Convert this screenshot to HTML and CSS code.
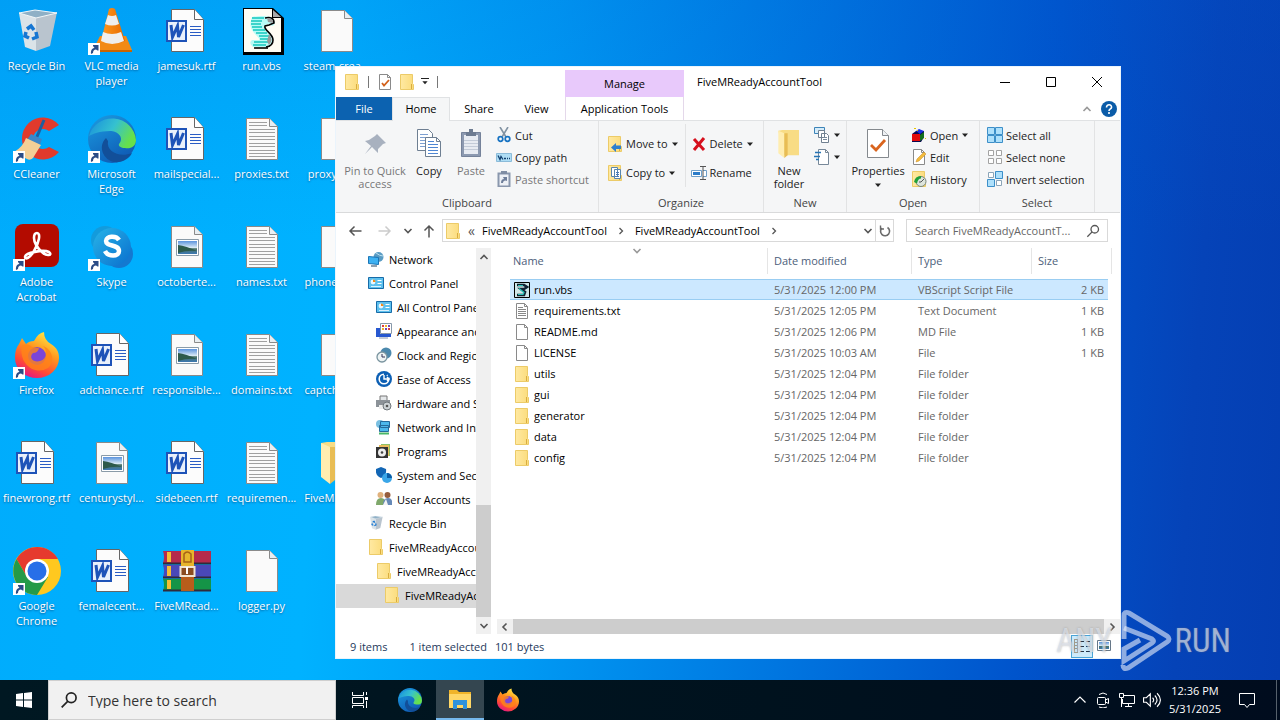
FILE: index.html
```
<!DOCTYPE html>
<html lang="en">
<head>
<meta charset="utf-8">
<title>Desktop</title>
<link rel="stylesheet" href="styles.css">
</head>
<body>
<svg class="defs" aria-hidden="true">
  <defs>
    <linearGradient id="g-cone" x1="0" x2="1"><stop offset="0" stop-color="#ff9a1f"/><stop offset="1" stop-color="#e66a00"/></linearGradient>
    <linearGradient id="g-edge-top" x1="0" y1="0" x2="1" y2="0.4"><stop offset="0" stop-color="#168ddd"/><stop offset=".55" stop-color="#35c1d0"/><stop offset="1" stop-color="#66e04c"/></linearGradient>
    <linearGradient id="g-edge-left" x1="0" y1="0" x2="0.6" y2="1"><stop offset="0" stop-color="#1b9de2"/><stop offset="1" stop-color="#0f5cb5"/></linearGradient>
    <linearGradient id="g-fox" x1="0.8" y1="0" x2="0.3" y2="1"><stop offset="0" stop-color="#fff04a"/><stop offset=".4" stop-color="#ff9a1f"/><stop offset=".75" stop-color="#ff4a35"/><stop offset="1" stop-color="#e31587"/></linearGradient>
    <linearGradient id="g-skype" x1="0" y1="0" x2="1" y2="1"><stop offset="0" stop-color="#27b4e8"/><stop offset="1" stop-color="#0a6fce"/></linearGradient>
    <linearGradient id="g-folder" x1="0" x2="1"><stop offset="0" stop-color="#ffe9a2"/><stop offset="1" stop-color="#fbdc7c"/></linearGradient>
    <linearGradient id="g-sky" x1="0" y1="0" x2="0" y2="1"><stop offset="0" stop-color="#5b93dd"/><stop offset=".5" stop-color="#d7e8f5"/><stop offset=".6" stop-color="#4d7465"/><stop offset="1" stop-color="#3b78b5"/></linearGradient>
    <linearGradient id="g-bin" x1="0" x2="1"><stop offset="0" stop-color="#e8eef2"/><stop offset="1" stop-color="#b3c0ca"/></linearGradient>
  </defs>
  <symbol id="i-short" viewBox="0 0 12 12"><path d="M0 0h12v12H0z" fill="#fff"/><path d="M3 11C2.500 7 4.500 5 6.500 5L5 3V2h5.500v5.500h-1L8 6.500C6 6.500 5 8 5 10z" fill="#2b4c86"/></symbol>
  <symbol id="i-bin" viewBox="0 0 48 48"><path d="M6 6l17 4v34l-11-4z" fill="#dbe3e8"/><path d="M23 10l21-5-7 34-14 5z" fill="#b9c4ce"/><path d="M6 6l16-3 22 3-21 5z" fill="#8fb0c6" stroke="#f2f6f8"/><path d="M14 22l4-3 3 4M23 25l1 5-5 2M16 31l-4-2 1-4" fill="none" stroke="#1676d2" stroke-width="3.500"/></symbol>
  <symbol id="i-vlc" viewBox="0 0 48 48"><path d="M12 29h26l6 14H5z" fill="#f28a16"/><path d="M5 43h39v2H5z" fill="#c96400"/><path d="M21 2q3-2 6 0l10 32q-12 6-24 0z" fill="url(#g-cone)"/><path d="M20 8q4 2 8 0l3 9q-7 3-14 0zM15 25q9 4 18 0l3 9q-12 6-23 0z" fill="#eee"/></symbol>
  <symbol id="i-page" viewBox="0 0 48 48"><path d="M8.500 3.500h23l8 8v33h-31z" fill="#fafafa" stroke="#8a8a8a"/><path d="M31.500 3.500v8h8" fill="#e8eef2" stroke="#8a8a8a"/></symbol>
  <symbol id="i-text" viewBox="0 0 48 48"><use href="#i-page"/><path d="M11 7.500h18M11 10.500h18M11 14.500h26M11 17.500h26M11 21.500h26M11 24.500h26M11 28.500h26M11 31.500h26M11 35.500h26M11 38.500h26M11 41.500h26" stroke="#a0a0a0"/></symbol>
  <symbol id="i-word" viewBox="0 0 48 48"><path d="M8.500 2.500h23l9 10v32h-32z" fill="#fcfcfc" stroke="#666"/><path d="M31.500 2.500v10h9" fill="#fff" stroke="#666"/><path d="M27 19.500h11M27 22.500h11M27 25.500h11M27 28.500h11" stroke="#2a5cc4"/><path d="M3 13h21v22H3z" fill="#1e53b8"/><path d="M5 15h17v18H5z" fill="#e9f0fb"/><path d="M8 18l1.500 12 5-11 1 11 5-12" fill="none" stroke="#1e53b8" stroke-width="3"/></symbol>
  <symbol id="i-image" viewBox="0 0 48 48"><use href="#i-page"/><path d="M13.500 16.500h22v16h-22z" fill="#fff" stroke="#8a9ba8"/><path d="M15 18h19v13H15z" fill="url(#g-sky)"/><path d="M15 22q8 1 19 6-10-1-19 2z" fill="#2d5a4b"/></symbol>
  <symbol id="i-vbs" viewBox="0 0 48 48"><path d="M5 1h30l11 10v37H5z" fill="#000"/><path d="M6 2h28v9h9v34H6z" fill="#fffdf4"/><path d="M35 3l8 7h-8z" fill="#aaa"/><path d="M14 10q10-2 18 0c6 2 6 8 2 9-5-3-10-1-6 3 8 6 9 14 1 18H15q-5-4-1-7h7c2-1-4-5-7-10-3-5-1-9 0-13z" fill="#b8fbf6"/><path d="M14 11h12M13 14h11M13 17h10M14 20h10M15 23h12M18 26h11M21 29h10M22 32h9M16 35h14M15 38h13" stroke="#14c8bd" stroke-width="1.500"/><path d="M27 11q9-2 9 5l-5 2-4 1c-2 4 8 7 8 14q0 6-7 7" fill="none" stroke="#000" stroke-width="1.600"/><path d="M29 11q7 0 6 5l-5-1zM31 27q5 6 0 11l-2-4z" fill="#999"/><path d="M16 41h14" stroke="#000" stroke-width="1.600"/></symbol>
  <symbol id="i-vbs16" viewBox="0 0 16 16"><path d="M.500.500h15v15H.500z" fill="#cfe6e8" stroke="#000"/><path d="M3 3h7l3 2-3 2H7l4 3-1 3H3" fill="none" stroke="#123" stroke-width="2.600"/><path d="M4 3.500h5M5 6.500l5 4-1 2H4" fill="none" stroke="#28c7ba" stroke-width="1.200"/></symbol>
  <symbol id="i-cc" viewBox="0 0 48 48"><path d="M46 10A21 21 0 1 0 46 37L36 32A10 10 0 1 1 36 16z" fill="#e13a2c"/><path d="M31 5l-8 19" stroke="#1d5fa0" stroke-width="3"/><path d="M18 19l11 5-2 6-13-5z" fill="#3b86c8"/><path d="M13 23l15 7-8 13q-3 3-6 1l-13-7q9-5 12-14z" fill="#f4cf96"/></symbol>
  <symbol id="i-edge" viewBox="0 0 48 48"><circle cx="24" cy="24" r="24" fill="url(#g-edge-left)"/><path d="M1 21A24 24 0 0 1 48 25c0 7-6 9-11 8-4 0-7-2-6-4 6-7-2-13-9-13C12 16 4 19 1 21z" fill="url(#g-edge-top)"/><path d="M18 23c-9 9-2 22 8 24 8 1 15-3 18-9-12 5-26-1-24-12z" fill="#124f99"/></symbol>
  <symbol id="i-adobe" viewBox="0 0 48 48"><rect x="2" y="1" width="44" height="43" rx="8" fill="#b30b00"/><path d="M24 10c4 0 2 10-3 18-4 7-9 9-9 6 0-4 18-8 24-5 4 3-2 5-7 0-5-4-8-10-8-14 0-3 1-5 3-5z" fill="none" stroke="#fff" stroke-width="2.600"/></symbol>
  <symbol id="i-skype" viewBox="0 0 48 48"><circle cx="17" cy="17" r="14" fill="#139bdc"/><circle cx="31" cy="31" r="14" fill="#1478d0"/><circle cx="24" cy="24" r="19" fill="url(#g-skype)"/><path d="M31 17c-3-5-13-4-13 1 0 6 13 3 13 10 0 6-11 6-14 0" fill="none" stroke="#fff" stroke-width="4.500"/></symbol>
  <symbol id="i-fox" viewBox="0 0 48 48"><path d="M6 13l3-6 4 6q3-3 8-3 4-8 10-9 0 8 7 12c6 4 8 8 8 14a22 20 0 0 1-44 0C2 21 3 17 6 13z" fill="url(#g-fox)"/><circle cx="24" cy="25" r="9" fill="#7b45d8"/><path d="M9 14q7-2 10 2l7 1q-1 5-6 5c-5 5 1 10 7 8 8-2 7-12 3-15 9 3 13 15 5 22-13 8-30-4-26-23z" fill="#ff8418" opacity=".8"/></symbol>
  <symbol id="i-chrome" viewBox="0 0 48 48"><circle cx="24" cy="24" r="24" fill="#ffc81f"/><path d="M3.500 12A24 24 0 0 1 45 12H24L14 30z" fill="#e63a2e"/><path d="M3.500 12A24 24 0 0 0 24 48l11-18-21 0z" fill="#249a48"/><circle cx="24" cy="24" r="12" fill="#fff"/><circle cx="24" cy="24" r="9.500" fill="#276fe8"/></symbol>
  <symbol id="i-rar" viewBox="0 0 48 48"><path d="M0 4h48v12H0q2-6 0-12z" fill="#b52a4c"/><path d="M0 18h48v12H0q2-6 0-12z" fill="#4a48b8"/><path d="M0 32h48v12H0q2-6 0-12z" fill="#159447"/><path d="M0 16.500h48M0 30.500h48M0 43.500h48" stroke="#302a3b" stroke-width="2"/><path d="M4 5h4v10H4zM4 19h4v10H4zM4 33h4v9H4z" fill="#f5bd34"/><path d="M18 3h13v17H18z" fill="#e7b52c"/><path d="M18 27h13v17H18z" fill="#b85d1b"/><path d="M21 7q3-4 7 0v8h-7z" fill="none" stroke="#a66217" stroke-width="1.500"/><path d="M17.500 20h14v9h-14z" fill="#8a4c20" stroke="#f1e4d2" stroke-width="2"/><path d="M24 20v7" stroke="#fff" stroke-width="2"/></symbol>
  <symbol id="i-bigfolder" viewBox="0 0 48 48"><path d="M8 4l6-1h25v38H16z" fill="#f8dc85"/><path d="M8 4l9 4v37l-9-7z" fill="#ffedb0"/><path d="M17 8h5v33l-5 4z" fill="#e8bd55"/></symbol>
  <symbol id="i-folder" viewBox="0 0 16 16"><path d="M1.500.500h12v9l1 1v5h-13z" fill="url(#g-folder)" stroke="#eccb68"/><path d="M12.500 10v5" stroke="#d9ad3f" fill="none"/></symbol>
  <symbol id="i-file" viewBox="0 0 16 16"><path d="M2.500.500h8l3 3v12h-11z" fill="#fff" stroke="#8a8a8a"/><path d="M10.500.500v3h3" fill="none" stroke="#8a8a8a"/></symbol>
  <symbol id="i-txt" viewBox="0 0 16 16"><use href="#i-file"/><path d="M4 4.500h5M4 6.500h8M4 8.500h8M4 10.500h8M4 12.500h8" stroke="#888"/></symbol>
  <symbol id="i-check" viewBox="0 0 16 16"><use href="#i-file"/><path d="M5 9l2 2.500 5-5.500" fill="none" stroke="#d2601a" stroke-width="1.800"/></symbol>
  <symbol id="i-props" viewBox="0 0 32 32"><path d="M5.500 1.500h15l6 6v22h-21z" fill="#fff" stroke="#84898e"/><path d="M20.500 1.500v6h6" fill="#eef1f4" stroke="#84898e"/><path d="M9 17l5 5 9-10" fill="none" stroke="#d9641e" stroke-width="2.800"/></symbol>
  <symbol id="i-down" viewBox="0 0 8 8"><path d="M1 2.500h6L4 6z" fill="#222"/></symbol>
  <symbol id="i-chev-up" viewBox="0 0 10 10"><path d="M1.500 7L5 3.500 8.500 7" fill="none" stroke="currentColor" stroke-width="1.600"/></symbol>
  <symbol id="i-chev-thin" viewBox="0 0 14 14"><path d="M1.500 9.500L7 4l5.500 5.500" fill="none" stroke="currentColor" stroke-width="1.200"/></symbol>
  <symbol id="i-chev-dn" viewBox="0 0 10 10"><path d="M1.500 3L5 6.500 8.500 3" fill="none" stroke="currentColor" stroke-width="1.600"/></symbol>
  <symbol id="i-chev-l" viewBox="0 0 10 10"><path d="M6.500 1.500L3 5l3.500 3.500" fill="none" stroke="currentColor" stroke-width="1.600"/></symbol>
  <symbol id="i-chev-r" viewBox="0 0 10 10"><path d="M3.500 2L6.500 5l-3 3" fill="none" stroke="currentColor" stroke-width="1.300"/></symbol>
  <symbol id="i-arrow" viewBox="0 0 16 16"><path d="M14.500 8H3M7.500 3.500L3 8l4.500 4.500" fill="none" stroke="currentColor" stroke-width="1.500"/></symbol>
  <symbol id="i-min" viewBox="0 0 12 12"><path d="M1 6.500h10" stroke="#000"/></symbol>
  <symbol id="i-max" viewBox="0 0 12 12"><path d="M1.500 1.500h9v9h-9z" fill="none" stroke="#000"/></symbol>
  <symbol id="i-close" viewBox="0 0 12 12"><path d="M1 1l10 10M11 1L1 11" stroke="#000"/></symbol>
  <symbol id="i-help" viewBox="0 0 16 16"><circle cx="8" cy="8" r="8" fill="#0b5ca8"/><path d="M5.500 6.500c0-4 5.500-3.500 5 0-.300 1.500-2.500 1.500-2.500 3.500M8 11v2" fill="none" stroke="#fff" stroke-width="1.600"/></symbol>
  <symbol id="i-pin" viewBox="0 0 32 32"><path d="M18 6l9 9-3 1-5 5v4l-6-6-7 7 6-8-6-5 4-1 6-4z" fill="#a8b1bf"/></symbol>
  <symbol id="i-copy" viewBox="0 0 32 32"><path d="M4.500 1.500h11l4 4v17h-15z" fill="#fff" stroke="#6e7f92"/><path d="M7 6.500h8M7 9.500h9M7 12.500h9M7 15.500h9M7 18.500h9" stroke="#7d9fd0"/><path d="M12.500 9.500h11l4 4v15h-15z" fill="#fff" stroke="#6e7f92"/><path d="M23.500 9.500v4h4" fill="none" stroke="#6e7f92"/><path d="M15 13.500h6M15 16.500h10M15 19.500h10M15 22.500h10M15 25.500h10" stroke="#4f86d2"/></symbol>
  <symbol id="i-paste" viewBox="0 0 32 32"><path d="M6.500 4.500h19v24h-19z" fill="#8c99b0" stroke="#75829a"/><path d="M9 7h14v19H9z" fill="#e7ebf2"/><path d="M11 4h10v4H11zM14 1h4v4h-4z" fill="#6d7b91"/><path d="M9 12.500h14M9 15.500h14M9 18.500h14M9 21.500h14" stroke="#c3cbd8"/></symbol>
  <symbol id="i-cut" viewBox="0 0 16 16"><path d="M4 0l6 10M12 0L6 10" stroke="#8293a3" stroke-width="1.600"/><circle cx="4.500" cy="12" r="2.300" fill="none" stroke="#1672c2" stroke-width="1.700"/><circle cx="11.500" cy="12" r="2.300" fill="none" stroke="#1672c2" stroke-width="1.700"/></symbol>
  <symbol id="i-path" viewBox="0 0 16 16"><path d="M.500 4.500h15v8H.500z" fill="#aeddf5" stroke="#8bbbd9"/><path d="M2 6.500l2 4 1-3 2 3M8 9.500h2M11 9.500h1M13 9.500h1" fill="none" stroke="#124070" stroke-width="1.300"/></symbol>
  <symbol id="i-pshort" viewBox="0 0 16 16"><path d="M2.500 2.500h11v13h-11z" fill="#eef1f6" stroke="#8a97ad" stroke-width="2"/><path d="M5 0h6v3H5z" fill="#7f8da4"/><path d="M5 12q0-4 3-4L7 6h4v4L9.500 9.500Q7 9.500 7 12z" fill="#6f7f9b"/></symbol>
  <symbol id="i-moveto" viewBox="0 0 16 16"><use href="#i-folder"/><path d="M14 9.500H9V7l-5 4.500L9 16v-3h5z" fill="#2d7fce"/></symbol>
  <symbol id="i-copyto" viewBox="0 0 16 16"><use href="#i-folder"/><path d="M4.500 2.500h6v9h-6zM7.500 4.500h6v9h-6z" fill="#fff" stroke="#5886ae"/><path d="M9 7.500h3M9 9.500h3M9 11.500h3" stroke="#4779b8"/></symbol>
  <symbol id="i-del" viewBox="0 0 16 16"><path d="M3 3l10 11M13 2L3 14" stroke="#d6101d" stroke-width="3"/></symbol>
  <symbol id="i-ren" viewBox="0 0 16 16"><path d="M.500 5.500h10v6H.500zM12 5.500h3.500v6H12" fill="#fff" stroke="#6f9fc8"/><path d="M2 7h7v3H2z" fill="#2b7cc9"/><path d="M9 1.500h6M12 1.500v13M9 14.500h6" stroke="#555" fill="none"/></symbol>
  <symbol id="i-newitem" viewBox="0 0 16 16"><path d="M.500.500h10v6H.500z" fill="#d5ecfa" stroke="#3d84b8"/><path d="M4.500 3.500h6v7h-6zM7.500 6.500h5l2 2v7h-7z" fill="#fff" stroke="#708090"/><path d="M9 10.500h4M9 12.500h4" stroke="#789"/></symbol>
  <symbol id="i-easy" viewBox="0 0 16 16"><path d="M4.500.500h7l3 3v12h-10z" fill="#fff" stroke="#778899"/><path d="M11.500.500v3h3" fill="none" stroke="#778899"/><path d="M1 3.500h6M0 7.500h6M2 10.500h3" stroke="#2674b5" stroke-width="1.500"/></symbol>
  <symbol id="i-open" viewBox="0 0 16 16"><path d="M1 7l4-3h8v6l-3 5H1z" fill="#0a0a50"/><path d="M1 7h8v7H1z" fill="#e30b0b"/><path d="M5 4l3-2 5 2-4 3z" fill="#1a30e0"/><path d="M9 8l4-3v6l-4 3z" fill="#11701d"/><path d="M3 1h2v1H3zM6 3h1v1H6zM14 11h1v1h-1z" fill="#e5c400"/></symbol>
  <symbol id="i-edit" viewBox="0 0 16 16"><use href="#i-file"/><path d="M5 13l1-3 7-7 2 2-7 7z" fill="#f2bb3c" stroke="#c98b28" stroke-width=".500"/></symbol>
  <symbol id="i-hist" viewBox="0 0 16 16"><use href="#i-folder"/><circle cx="10" cy="10.500" r="5" fill="#dde5dd" stroke="#78867a"/><path d="M3 11q1-6 7-6v2.500q-3 0-4 5z" fill="#21a03a"/><path d="M10 11l3-3M10 11h-2" stroke="#555"/></symbol>
  <symbol id="i-selall" viewBox="0 0 16 16"><path d="M.500.500h7v7h-7zM8.500.500h7v7h-7zM.500 8.500h7v7h-7zM8.500 8.500h7v7h-7z" fill="#aee0fb" stroke="#3c8fc9"/></symbol>
  <symbol id="i-selnone" viewBox="0 0 16 16"><path d="M1.500 1.500h5v5h-5zM9.500 1.500h5v5h-5zM1.500 9.500h5v5h-5zM9.500 9.500h5v5h-5z" fill="#fff" stroke="#a3a3a3"/></symbol>
  <symbol id="i-selinv" viewBox="0 0 16 16"><path d="M1.500 1.500h5v5h-5zM9.500 9.500h5v5h-5z" fill="#fff" stroke="#8ba5b8"/><path d="M8.500.500h7v7h-7zM.500 8.500h7v7h-7z" fill="#aee0fb" stroke="#3c8fc9"/></symbol>
  <symbol id="i-net" viewBox="0 0 16 16"><circle cx="10.500" cy="6" r="5" fill="#5a9cc4"/><path d="M8 2q4 3 7 3" stroke="#b9dff0" fill="none"/><path d="M.500 5.500l10 1v7l-10-1z" fill="#3db1f2" stroke="#1a75b6"/><path d="M3 15h6" stroke="#6a8296" stroke-width="1.500"/></symbol>
  <symbol id="i-cpl" viewBox="0 0 16 16"><path d="M.500 2.500h15v11H.500z" fill="#5dc1ef" stroke="#176ba8"/><circle cx="5" cy="7" r="2.400" fill="#eaf7ff"/><path d="M5 7V4.500A2.500 2.500 0 0 1 7.500 7z" fill="#f08a1a"/><path d="M9.500 5.500h4M9.500 8.500h4" stroke="#fff"/><path d="M3 11.500h10" stroke="#d9f1ff"/></symbol>
  <symbol id="i-app" viewBox="0 0 16 16"><path d="M4.500.500h11v10h-11z" fill="#fff" stroke="#8899aa"/><path d="M6 2h2v2H6zM12 5h2v2h-2z" fill="#dc3d3d"/><path d="M9 2h2v2H9zM6 5h2v2H6z" fill="#f2b022"/><path d="M12 2h2v2h-2zM9 5h2v2H9z" fill="#7646b4"/><path d="M0 5h4v6h11v3H0z" fill="#2758d0"/><path d="M3 15h9" stroke="#8898b0"/></symbol>
  <symbol id="i-clock" viewBox="0 0 16 16"><circle cx="10" cy="6" r="5.500" fill="#4c89ad"/><circle cx="6" cy="10" r="5" fill="#eef4f4" stroke="#7a949f" stroke-width="1.300"/><path d="M6 7v3h3" fill="none" stroke="#335"/></symbol>
  <symbol id="i-ease" viewBox="0 0 16 16"><circle cx="8" cy="8" r="8" fill="#0c5fb4"/><circle cx="8" cy="8" r="4.800" fill="none" stroke="#fff" stroke-width="1.600" stroke-dasharray="22 3 1 2"/><path d="M8 4v4h5M11 6l2 2-2 2" fill="none" stroke="#fff" stroke-width="1.400"/></symbol>
  <symbol id="i-hw" viewBox="0 0 16 16"><path d="M4 1h7v5H4z" fill="#e4e7e9" stroke="#777"/><path d="M0 5h14v7H0z" fill="#8c9298"/><path d="M3 10h6v4H3z" fill="#eee"/><circle cx="11" cy="11" r="4" fill="#cdd3d6" stroke="#6f767b"/><circle cx="11" cy="11" r="1.300" fill="#555"/></symbol>
  <symbol id="i-ni" viewBox="0 0 16 16"><circle cx="4" cy="5" r="4" fill="#79bfe1"/><path d="M4.500 2.500h9v6h-9zM3.500 6.500h9v6h-9z" fill="#4cb9ed" stroke="#246b9c"/><path d="M3 14.500h10" stroke="#48b768" stroke-width="2"/></symbol>
  <symbol id="i-prog" viewBox="0 0 16 16"><path d="M5 1h9v12H5z" fill="#8cc16a"/><path d="M3 2h10v11H3z" fill="#e9bd5b"/><path d="M0 4h12v11H0z" fill="#333"/><circle cx="6" cy="9.500" r="4" fill="#eee"/><circle cx="6" cy="9.500" r="1.300" fill="#444"/></symbol>
  <symbol id="i-sec" viewBox="0 0 16 16"><path d="M0 2l5-2 5 2q1 7-5 9Q-1 9 0 2z" fill="#1266b5"/><circle cx="11" cy="11" r="5" fill="#3aa6e8"/><path d="M11 11V6a5 5 0 0 1 5 5z" fill="#0c5da5"/></symbol>
  <symbol id="i-user" viewBox="0 0 16 16"><circle cx="4.500" cy="4" r="3" fill="#e0b17c"/><path d="M0 14q0-7 5-7t5 7z" fill="#7fa86b"/><circle cx="11.500" cy="4" r="3" fill="#965d3d"/><path d="M7 14q0-7 5-7t4 7z" fill="#6689b7"/><path d="M7 14l3-6 2 6z" fill="#f3f3f3"/></symbol>
  <symbol id="i-refresh" viewBox="0 0 14 14"><path d="M9.500 3.500A4.500 4.500 0 1 1 4 4" fill="none" stroke="#6b6b6b" stroke-width="1.600"/><path d="M2.500 1.500V5H6" fill="none" stroke="#6b6b6b" stroke-width="1.400"/></symbol>
  <symbol id="i-mag" viewBox="0 0 16 16"><circle cx="10" cy="6" r="4.300" fill="none" stroke="currentColor" stroke-width="1.500"/><path d="M7 9l-5.500 5.500" stroke="currentColor" stroke-width="1.500"/></symbol>
  <symbol id="i-details" viewBox="0 0 16 16"><path d="M.500 1v14M3.500 1v14M0 1.500h4M0 4.500h4M0 7.500h4M0 10.500h4M0 14.500h4" stroke="#a19b8c" fill="none"/><path d="M6 3.500h4M12 3.500h4M6 8.500h4M12 8.500h4M6 13.500h4M12 13.500h4" stroke="#234"/></symbol>
  <symbol id="i-thumb" viewBox="0 0 16 16"><path d="M1.500 2.500h13v10h-13z" fill="#fff" stroke="#667788"/><path d="M3 4h10v7H3z" fill="url(#g-sky)"/></symbol>
  <symbol id="i-win" viewBox="0 0 16 16"><path d="M0 2l7-1v6.500H0zM8 1l8-1v7.500H8zM0 8.500h7V15l-7-1zM8 8.500h8V16l-8-1z" fill="#fff"/></symbol>
  <symbol id="i-task" viewBox="0 0 16 16"><path d="M.500 0v3.500h11V0M.500 16v-2.500h11V16M.500 5.500h11v6H.500zM14.500 0v3M14.500 9v7" fill="none" stroke="#fff"/><path d="M13 5h3v3h-3z" fill="#fff"/></symbol>
  <symbol id="i-explorer" viewBox="0 0 24 24"><path d="M1 3h8l2 2h12v16H1z" fill="#f0b429"/><path d="M1 7h22v14H1z" fill="#ffd766"/><path d="M5 13h14v9h-4v-4H9v4H5z" fill="#2e92dc"/></symbol>
  <symbol id="i-cam" viewBox="0 0 16 16"><rect x="2.500" y="5.500" width="8" height="7" rx="1" fill="none" stroke="#fff"/><path d="M10.500 8l3-1.500v5l-3-1.500M4 2.500q4-3 8 0M4 15q4 2 8 0" fill="none" stroke="#fff"/></symbol>
  <symbol id="i-lan" viewBox="0 0 16 16"><path d="M5 3.500h10.500v8H3.500V7M9.500 11.500v3M6 14.500h7M.500 1.500h4v4h-4zM2.500 5.500V15" fill="none" stroke="#fff"/></symbol>
  <symbol id="i-vol" viewBox="0 0 16 16"><path d="M.500 6h2.500l3.500-3.500v11L3 10H.500zM8.500 6q2 2 0 4M10.500 4q4 4 0 8M12.500 2q6 6 0 12" fill="none" stroke="#fff"/></symbol>
  <symbol id="i-note" viewBox="0 0 16 16"><path d="M.500 1.500h15v11h-5L8 15.500l-2.500-3h-5z" fill="none" stroke="#fff"/></symbol>
</svg>

<div class="screen">
<main class="desktop">
  <div class="icons">
    <div class="item"><svg><use href="#i-bin"/></svg><span>Recycle Bin</span></div>
    <div class="item"><svg><use href="#i-cc"/></svg><svg class="badge"><use href="#i-short"/></svg><span>CCleaner</span></div>
    <div class="item"><svg><use href="#i-adobe"/></svg><svg class="badge"><use href="#i-short"/></svg><span>Adobe Acrobat</span></div>
    <div class="item"><svg><use href="#i-fox"/></svg><svg class="badge"><use href="#i-short"/></svg><span>Firefox</span></div>
    <div class="item"><svg><use href="#i-word"/></svg><span>finewrong.rtf</span></div>
    <div class="item"><svg><use href="#i-chrome"/></svg><svg class="badge"><use href="#i-short"/></svg><span>Google Chrome</span></div>

    <div class="item"><svg><use href="#i-vlc"/></svg><svg class="badge"><use href="#i-short"/></svg><span>VLC media player</span></div>
    <div class="item"><svg><use href="#i-edge"/></svg><svg class="badge"><use href="#i-short"/></svg><span>Microsoft Edge</span></div>
    <div class="item"><svg><use href="#i-skype"/></svg><svg class="badge"><use href="#i-short"/></svg><span>Skype</span></div>
    <div class="item"><svg><use href="#i-word"/></svg><span>adchance.rtf</span></div>
    <div class="item"><svg><use href="#i-image"/></svg><span>centurystyl...</span></div>
    <div class="item"><svg><use href="#i-word"/></svg><span>femalecent...</span></div>

    <div class="item"><svg><use href="#i-word"/></svg><span>jamesuk.rtf</span></div>
    <div class="item"><svg><use href="#i-word"/></svg><span>mailspecial...</span></div>
    <div class="item"><svg><use href="#i-image"/></svg><span>octoberte...</span></div>
    <div class="item"><svg><use href="#i-image"/></svg><span>responsible...</span></div>
    <div class="item"><svg><use href="#i-word"/></svg><span>sidebeen.rtf</span></div>
    <div class="item"><svg><use href="#i-rar"/></svg><span>FiveMRead...</span></div>

    <div class="item"><svg><use href="#i-vbs"/></svg><span>run.vbs</span></div>
    <div class="item"><svg><use href="#i-text"/></svg><span>proxies.txt</span></div>
    <div class="item"><svg><use href="#i-text"/></svg><span>names.txt</span></div>
    <div class="item"><svg><use href="#i-text"/></svg><span>domains.txt</span></div>
    <div class="item"><svg><use href="#i-text"/></svg><span>requiremen...</span></div>
    <div class="item"><svg><use href="#i-page"/></svg><span>logger.py</span></div>

    <div class="item"><svg><use href="#i-page"/></svg><span>steam-crea...</span></div>
    <div class="item"><svg><use href="#i-page"/></svg><span>proxy-ma...</span></div>
    <div class="item"><svg><use href="#i-page"/></svg><span>phone-veri...</span></div>
    <div class="item"><svg><use href="#i-page"/></svg><span>captcha-so...</span></div>
    <div class="item"><svg><use href="#i-bigfolder"/></svg><span>FiveMRead...</span></div>
  </div>

  <section class="window" aria-label="FiveMReadyAccountTool">
    <header class="titlebar">
      <div class="quick">
        <svg class="s16"><use href="#i-folder"/></svg><i></i>
        <svg class="s16"><use href="#i-check"/></svg>
        <svg class="s16"><use href="#i-folder"/></svg>
        <svg class="s8 over"><use href="#i-down"/></svg><i></i>
      </div>
      <div class="manage">Manage</div>
      <h1>FiveMReadyAccountTool</h1>
      <div class="controls">
        <button aria-label="Minimize"><svg><use href="#i-min"/></svg></button>
        <button aria-label="Maximize"><svg><use href="#i-max"/></svg></button>
        <button aria-label="Close"><svg><use href="#i-close"/></svg></button>
      </div>
    </header>
    <nav class="tabs">
      <button class="file">File</button>
      <button class="home">Home</button>
      <button class="share">Share</button>
      <button class="view">View</button>
      <button class="tools">Application Tools</button>
      <div class="tabs-end"><svg class="s10"><use href="#i-chev-up"/></svg><svg class="s16"><use href="#i-help"/></svg></div>
    </nav>
    <div class="ribbon">
      <div class="group clipboard">
        <div class="tools-row">
          <button class="big dim pin"><svg class="s32"><use href="#i-pin"/></svg>Pin to Quick access</button>
          <button class="big"><svg class="s32"><use href="#i-copy"/></svg>Copy</button>
          <button class="big dim"><svg class="s32"><use href="#i-paste"/></svg>Paste</button>
          <div class="stack">
            <button><svg class="s16"><use href="#i-cut"/></svg>Cut</button>
            <button><svg class="s16"><use href="#i-path"/></svg>Copy path</button>
            <button class="dim"><svg class="s16"><use href="#i-pshort"/></svg>Paste shortcut</button>
          </div>
        </div>
        <div class="caption">Clipboard</div>
      </div>
      <div class="group organize">
        <div class="tools-row">
          <div class="stack wide">
            <button><svg class="s16"><use href="#i-moveto"/></svg>Move to<svg class="s8"><use href="#i-down"/></svg></button>
            <button><svg class="s16"><use href="#i-copyto"/></svg>Copy to<svg class="s8"><use href="#i-down"/></svg></button>
          </div>
          <div class="stack wide second">
            <button><svg class="s16"><use href="#i-del"/></svg>Delete<svg class="s8"><use href="#i-down"/></svg></button>
            <button><svg class="s16"><use href="#i-ren"/></svg>Rename</button>
          </div>
        </div>
        <div class="caption">Organize</div>
      </div>
      <div class="group new">
        <div class="tools-row">
          <button class="big"><svg class="s32"><use href="#i-bigfolder"/></svg>New folder</button>
          <div class="stack">
            <button aria-label="New item"><svg class="s16"><use href="#i-newitem"/></svg><svg class="s8"><use href="#i-down"/></svg></button>
            <button aria-label="Easy access"><svg class="s16"><use href="#i-easy"/></svg><svg class="s8"><use href="#i-down"/></svg></button>
          </div>
        </div>
        <div class="caption">New</div>
      </div>
      <div class="group open">
        <div class="tools-row">
          <button class="big props"><svg class="s32"><use href="#i-props"/></svg>Properties<svg class="s8"><use href="#i-down"/></svg></button>
          <div class="stack">
            <button><svg class="s16"><use href="#i-open"/></svg>Open<svg class="s8"><use href="#i-down"/></svg></button>
            <button><svg class="s16"><use href="#i-edit"/></svg>Edit</button>
            <button><svg class="s16"><use href="#i-hist"/></svg>History</button>
          </div>
        </div>
        <div class="caption">Open</div>
      </div>
      <div class="group select">
        <div class="tools-row">
          <div class="stack">
            <button><svg class="s16"><use href="#i-selall"/></svg>Select all</button>
            <button><svg class="s16"><use href="#i-selnone"/></svg>Select none</button>
            <button><svg class="s16"><use href="#i-selinv"/></svg>Invert selection</button>
          </div>
        </div>
        <div class="caption">Select</div>
      </div>
    </div>
    <div class="address">
      <svg class="s16"><use href="#i-arrow"/></svg>
      <svg class="s16 off"><use href="#i-arrow"/></svg>
      <svg class="s10"><use href="#i-chev-dn"/></svg>
      <svg class="s16 up"><use href="#i-arrow"/></svg>
      <div class="crumbs">
        <svg class="s16"><use href="#i-folder"/></svg>
        <span class="dbl">«</span><a href="#">FiveMReadyAccountTool</a><svg class="s10"><use href="#i-chev-r"/></svg><a href="#">FiveMReadyAccountTool</a><svg class="s10"><use href="#i-chev-r"/></svg>
        <svg class="s10 drop"><use href="#i-chev-dn"/></svg>
        <button class="refresh" aria-label="Refresh"><svg><use href="#i-refresh"/></svg></button>
      </div>
      <label class="find"><input type="text" aria-label="Search folder" placeholder="Search FiveMReadyAccountT..."><svg class="s14"><use href="#i-mag"/></svg></label>
    </div>
    <div class="panes">
      <ul class="tree">
        <li><svg class="s16"><use href="#i-net"/></svg>Network</li>
        <li><svg class="s16"><use href="#i-cpl"/></svg>Control Panel</li>
        <li class="l2"><svg class="s16"><use href="#i-cpl"/></svg>All Control Panel Items</li>
        <li class="l2"><svg class="s16"><use href="#i-app"/></svg>Appearance and Personalization</li>
        <li class="l2"><svg class="s16"><use href="#i-clock"/></svg>Clock and Region</li>
        <li class="l2"><svg class="s16"><use href="#i-ease"/></svg>Ease of Access</li>
        <li class="l2"><svg class="s16"><use href="#i-hw"/></svg>Hardware and Sound</li>
        <li class="l2"><svg class="s16"><use href="#i-ni"/></svg>Network and Internet</li>
        <li class="l2"><svg class="s16"><use href="#i-prog"/></svg>Programs</li>
        <li class="l2"><svg class="s16"><use href="#i-sec"/></svg>System and Security</li>
        <li class="l2"><svg class="s16"><use href="#i-user"/></svg>User Accounts</li>
        <li><svg class="s16"><use href="#i-bin"/></svg>Recycle Bin</li>
        <li><svg class="s16"><use href="#i-folder"/></svg>FiveMReadyAccountTool</li>
        <li class="l2"><svg class="s16"><use href="#i-folder"/></svg>FiveMReadyAccountTool</li>
        <li class="l3 current"><svg class="s16"><use href="#i-folder"/></svg>FiveMReadyAccountTool</li>
      </ul>
      <div class="vbar"><svg class="s10"><use href="#i-chev-up"/></svg><b></b><svg class="s10"><use href="#i-chev-dn"/></svg></div>
      <div class="files">
        <div class="list">
          <table>
            <thead><tr><th class="c-name">Name<svg class="s10 sort"><use href="#i-chev-dn"/></svg></th><th class="c-date">Date modified</th><th class="c-type">Type</th><th class="c-size">Size</th></tr></thead>
            <tbody>
              <tr class="gap"><td colspan="4"></td></tr>
              <tr class="sel"><td><svg class="s16"><use href="#i-vbs16"/></svg>run.vbs</td><td>5/31/2025 12:00 PM</td><td>VBScript Script File</td><td>2 KB</td></tr>
              <tr><td><svg class="s16"><use href="#i-txt"/></svg>requirements.txt</td><td>5/31/2025 12:05 PM</td><td>Text Document</td><td>1 KB</td></tr>
              <tr><td><svg class="s16"><use href="#i-file"/></svg>README.md</td><td>5/31/2025 12:06 PM</td><td>MD File</td><td>1 KB</td></tr>
              <tr><td><svg class="s16"><use href="#i-file"/></svg>LICENSE</td><td>5/31/2025 10:03 AM</td><td>File</td><td>1 KB</td></tr>
              <tr><td><svg class="s16"><use href="#i-folder"/></svg>utils</td><td>5/31/2025 12:04 PM</td><td>File folder</td><td></td></tr>
              <tr><td><svg class="s16"><use href="#i-folder"/></svg>gui</td><td>5/31/2025 12:04 PM</td><td>File folder</td><td></td></tr>
              <tr><td><svg class="s16"><use href="#i-folder"/></svg>generator</td><td>5/31/2025 12:04 PM</td><td>File folder</td><td></td></tr>
              <tr><td><svg class="s16"><use href="#i-folder"/></svg>data</td><td>5/31/2025 12:04 PM</td><td>File folder</td><td></td></tr>
              <tr><td><svg class="s16"><use href="#i-folder"/></svg>config</td><td>5/31/2025 12:04 PM</td><td>File folder</td><td></td></tr>
            </tbody>
          </table>
        </div>
        <div class="hbar"><svg class="s10"><use href="#i-chev-l"/></svg><b></b><svg class="s10 flip"><use href="#i-chev-l"/></svg></div>
      </div>
    </div>
    <footer class="status"><span>9 items</span><span>1 item selected</span><span>101 bytes</span>
      <div class="modes"><button class="on" aria-label="Details"><svg class="s16"><use href="#i-details"/></svg></button><button aria-label="Large icons"><svg class="s16"><use href="#i-thumb"/></svg></button></div>
    </footer>
  </section>

  <div class="watermark"><span>ANY</span><svg viewBox="0 0 56 64"><path d="M8 30V7q0-5 5-3l38 23q4 3 0 6L12 59q-5 2-5-3" /><path d="M8 19l28 11q3 2 0 4L8 52V40l16-9"/></svg><span>RUN</span></div>
</main>

<footer class="taskbar">
  <button class="start" aria-label="Start"><svg class="s16"><use href="#i-win"/></svg></button>
  <label class="search"><svg class="s18"><use href="#i-mag"/></svg><input type="text" aria-label="Search" placeholder="Type here to search"></label>
  <button aria-label="Task View"><svg class="s16"><use href="#i-task"/></svg></button>
  <button class="edge" aria-label="Edge"><svg class="s24"><use href="#i-edge"/></svg></button>
  <button class="active" aria-label="File Explorer"><svg class="s24"><use href="#i-explorer"/></svg></button>
  <button aria-label="Firefox"><svg class="s24"><use href="#i-fox"/></svg></button>
  <div class="tray">
    <svg class="s14"><use href="#i-chev-thin"/></svg>
    <svg class="s16"><use href="#i-cam"/></svg>
    <svg class="s16"><use href="#i-lan"/></svg>
    <svg class="s18"><use href="#i-vol"/></svg>
    <time>12:36 PM<br>5/31/2025</time>
    <svg class="s16"><use href="#i-note"/></svg>
  </div>
</footer>
</div>
</body>
</html>
```
FILE: styles.css
```
* { box-sizing: border-box; }
body { margin: 0; font: 11px/15px "Open Sans", "Noto Sans", sans-serif; color: #000; }
button { border: 0; padding: 0; background: none; font: inherit; color: inherit; }
input { font: inherit; }
svg { display: block; flex: none; }
.defs { position: absolute; width: 0; height: 0; }
.s8 { width: 8px; height: 8px; }
.s10 { width: 10px; height: 10px; }
.s14 { width: 14px; height: 14px; }
.s16 { width: 16px; height: 16px; }
.s18 { width: 18px; height: 18px; }
.s24 { width: 24px; height: 24px; }
.s32 { width: 32px; height: 32px; }

.screen { display: flex; flex-direction: column; height: 100vh; overflow: hidden; }
.desktop {
  position: relative; flex: 1; min-height: 0;
  background:
    linear-gradient(180deg, rgba(0, 90, 210, .16), rgba(0, 90, 210, 0) 35%),
    linear-gradient(94deg, #00acfc 0%, #00b2ff 26%, #009bf4 42%, #0076e0 62%, #0054cc 80%, #0543b8 92%, #043eb2 100%);
}

.icons { display: grid; grid-auto-flow: column; grid-template-rows: repeat(6, 108px); grid-auto-columns: 75px; height: 100%; margin-left: -1px; }
.item { position: relative; display: flex; flex-direction: column; align-items: center; gap: 3px; padding-top: 7px; color: #fff; text-align: center; text-shadow: 0 1px 2px rgba(0, 40, 90, .6); }
.item svg { width: 48px; height: 48px; }
.item span { padding: 0 2px; }
.item .badge { position: absolute; left: 14px; top: 43px; width: 12px; height: 12px; }

.window { position: absolute; left: 335px; top: 66px; width: 786px; height: 593px; display: flex; flex-direction: column; background: #fff; border: 1px solid #eaf4fc; }
.titlebar { display: flex; align-items: center; height: 30px; flex: none; }
.quick { display: flex; align-items: center; gap: 6px; width: 229px; padding-left: 8px; }
.quick i { width: 1px; height: 12px; margin: 0 2px; background: #777; }
.over { border-top: 1px solid #222; }
.manage { align-self: flex-end; width: 119px; height: 27px; line-height: 28px; text-align: center; background: #e8c9fb; }
.titlebar h1 { margin: 0 auto 0 13px; padding-bottom: 2px; font-size: 11px; font-weight: 400; }
.controls { display: flex; }
.controls button { width: 46px; height: 28px; display: grid; place-items: center; }
.controls svg { width: 12px; height: 12px; }

.tabs { display: flex; height: 24px; flex: none; border-bottom: 1px solid #e0e2e4; }
.tabs .file { width: 56px; background: #0c62b0; color: #fff; }
.tabs .home { width: 58px; height: 24px; padding-bottom: 2px; background: #f5f6f7; border: 1px solid #e0e2e4; border-bottom: 0; }
.tabs .share { width: 58px; }
.tabs .view { width: 57px; }
.tabs .tools { width: 119px; border: solid #e4d8ea; border-width: 0 1px; }
.tabs-end { display: flex; align-items: center; gap: 9px; margin-left: auto; padding-right: 3px; color: #999; }

.ribbon { display: flex; height: 92px; flex: none; background: #f5f6f7; border-bottom: 1px solid #d9dadb; color: #222; }
.group { display: flex; flex-direction: column; justify-content: space-between; padding: 3px 0 2px; border-right: 1px solid #e2e3e4; }
.tools-row { display: flex; }
.caption { text-align: center; color: #444; }
.clipboard { width: 263px; }
.organize { width: 165px; }
.new { width: 83px; }
.open { width: 133px; }
.select { width: 115px; }
.big { display: flex; flex-direction: column; align-items: center; gap: 4px; width: 42px; padding-top: 4px; line-height: 13px; }
.pin { width: 72px; padding-left: 6px; }
.dim { color: #777; }
.stack { display: flex; flex-direction: column; padding-left: 4px; }
.stack button { display: flex; align-items: center; gap: 3px; height: 22px; white-space: nowrap; }
.wide { padding-top: 5px; padding-left: 8px; }
.wide button { height: 29px; }
.second { margin-left: 6px; padding-left: 5px; border-left: 1px solid #e2e3e4; }
.new .big { width: 50px; }
.new .stack { padding-left: 0; }
.props { width: 62px; }
.open .stack { padding-left: 2px; }
.select .stack { padding-left: 7px; }

.address { display: flex; align-items: center; height: 35px; flex: none; padding: 0 12px 0 11px; color: #555; }
.address > .off { margin-left: 14px; color: #ccc; transform: scaleX(-1); }
.address > .s10 { margin-left: 10px; }
.address > .up { margin-left: 8px; transform: rotate(90deg); }
.crumbs { display: flex; align-items: center; flex: 1; height: 23px; margin-left: 5px; padding-left: 2px; border: 1px solid #d9d9d9; }
.crumbs a { padding-bottom: 1px; color: #000; text-decoration: none; }
.crumbs .dbl { width: 21px; text-align: center; font-size: 14px; }
.crumbs a + .s10 { margin: 0 9px; }
.crumbs .drop { margin-left: auto; margin-right: 2px; }
.refresh { display: grid; place-items: center; width: 18px; height: 21px; border-left: 1px solid #d9d9d9; }
.refresh svg { width: 14px; height: 14px; }
.find { display: flex; align-items: center; width: 202px; height: 23px; margin-left: 12px; padding: 0 7px 0 8px; border: 1px solid #d9d9d9; }
.find input, .search input { flex: 1; min-width: 0; padding: 0; border: 0; outline: 0; background: none; }
.find input::placeholder { color: #666; opacity: 1; }

.panes { display: flex; flex: 1; min-height: 0; }
.tree { width: 140px; margin: 0; padding: 0; list-style: none; overflow: hidden; }
.tree li { display: flex; align-items: center; gap: 5px; height: 24px; padding: 0 0 2px 32px; white-space: nowrap; }
.tree .l2 { padding-left: 40px; }
.tree .l3 { padding-left: 48px; }
.tree .current { background: #d9d9d9; }
.vbar { display: flex; flex-direction: column; align-items: center; width: 15px; padding: 4px 0 3px; background: #f0f0f0; color: #555; }
.vbar b { width: 15px; height: 112px; margin: auto 0 4px; background: #cdcdcd; }
.files { display: flex; flex-direction: column; flex: 1; min-width: 0; padding-left: 6px; }
.list { flex: 1; min-height: 0; padding: 0 12px 0 13px; }
table { width: 100%; table-layout: fixed; border-collapse: separate; border-spacing: 0; }
th { position: relative; height: 26px; padding: 0 6px 2px; border-right: 1px solid #e5e5e5; font-weight: 400; text-align: left; color: #4c607a; }
th:first-child { padding-left: 3px; }
.c-name { width: 258px; }
.c-date { width: 144px; }
.c-type { width: 120px; }
.c-size { border-right: 0; }
.c-size::after { content: ""; position: absolute; right: -4px; top: 0; bottom: 0; border-right: 1px solid #e5e5e5; }
.sort { position: absolute; left: 122px; top: -2px; color: #999; }
td { height: 21px; padding: 0 6px; border: solid transparent; border-width: 1px 0; line-height: 17px; color: #666; }
td:first-child { display: flex; align-items: center; gap: 4px; padding-left: 4px; color: #000; }
td:last-child { padding-right: 4px; text-align: right; }
.gap td:first-child { display: table-cell; height: 5px; border: 0; }
.sel td { background: #cce8ff; border-color: #99cdf2; }
.hbar { display: flex; align-items: center; height: 15px; gap: 3px; padding: 0 3px; background: #f0f0f0; color: #555; }
.hbar b { flex: 1; height: 15px; background: #cdcdcd; }
.flip { transform: scaleX(-1); }
.status { display: flex; align-items: center; height: 24px; flex: none; padding: 0 5px 0 14px; color: #1e395b; }
.status span:nth-child(2) { margin: 0 8px 0 22px; }
.modes { display: flex; margin-left: auto; }
.modes button { display: grid; place-items: center; width: 22px; height: 23px; }
.modes .on { background: #cdeafa; border: 1px solid #4aa5d8; }

.watermark { position: absolute; right: 49px; bottom: 7px; display: flex; align-items: center; gap: 3px; font: 400 33px/64px "Roboto Condensed", Roboto, sans-serif; color: rgba(235, 240, 250, .6); text-shadow: 0 0 2px rgba(120, 120, 120, .5); pointer-events: none; }
.watermark svg { width: 56px; height: 64px; fill: none; stroke: rgba(235, 240, 250, .6); stroke-width: 5; }

.taskbar { display: flex; align-items: stretch; height: 40px; flex: none; background: linear-gradient(90deg, #001822, #00121e 60%, #000c1e); color: #fff; }
.taskbar button { display: grid; place-items: center; width: 48px; }
.search { display: flex; align-items: center; gap: 10px; width: 288px; padding: 0 11px; background: #f1f1f1; border: 1px solid #cfcfcf; color: #222; font-size: 14px; }
.search input::placeholder { color: #333; opacity: 1; }
.taskbar .edge { width: 52px; }
.taskbar .active { background: #344650; border-bottom: 2px solid #76b9ed; }
.tray { display: flex; align-items: center; gap: 8px; margin-left: auto; margin-right: 3px; padding-right: 21px; border-right: 1px solid #56616c; }
.tray time { text-align: center; line-height: 18px; }
.tray time + svg { margin-left: 10px; }
```
